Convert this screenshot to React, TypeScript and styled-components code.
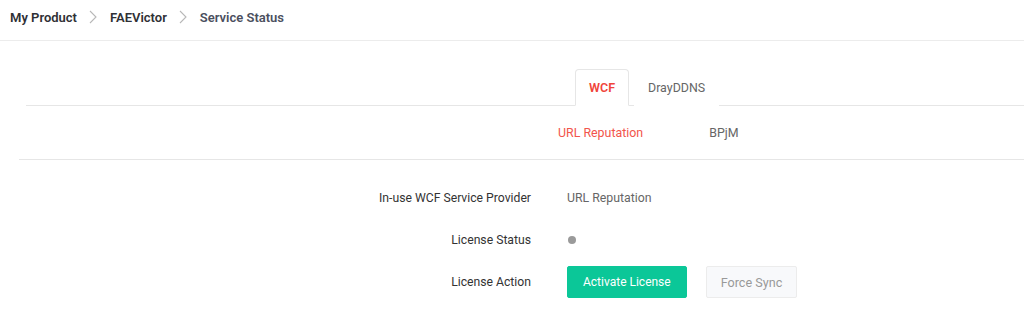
import styled, { createGlobalStyle } from "styled-components";

const GlobalStyle = createGlobalStyle`
    body {
        margin: 0;
        background: #fff;
        font-family: Roboto, "Liberation Sans", Arial, sans-serif;
        color: #333;
    }
`;

const Page = styled.div`
    width: 1024px;
    height: 310px;
    overflow: hidden;
`;

const Breadcrumb = styled.nav`
    height: 34px;
    padding: 0 10px 6px;
    display: flex;
    align-items: center;
    border-bottom: 1px solid #ececec;
`;

const Crumb = styled.span<{ $current?: boolean }>`
    font-size: 13px;
    font-weight: 600;
    color: ${(p) => (p.$current ? "#4b4f5e" : "#2f3035")};
`;

const Sep = styled.span`
    display: flex;
    align-items: center;
    padding: 0 13px 0 12px;
`;

const TabBar = styled.div`
    margin: 28px 0 0 26px;
    padding-left: 549px;
    display: flex;
    border-bottom: 1px solid #e6e6e6;
`;

const Tab = styled.div<{ $active?: boolean }>`
    height: 35px;
    padding: 0 13px;
    margin-bottom: -1px;
    display: flex;
    align-items: center;
    font-size: ${(p) => (p.$active ? "12.5px" : "12.4px")};
    font-weight: ${(p) => (p.$active ? 600 : 400)};
    color: ${(p) => (p.$active ? "#f0443a" : "#666")};
    background: #fff;
    border: 1px solid ${(p) => (p.$active ? "#e6e6e6" : "transparent")};
    border-bottom: 1px solid ${(p) => (p.$active ? "#fff" : "transparent")};
    border-radius: 4px 4px 0 0;
    & + & {
        margin-left: 5px;
    }
`;

const SubTabBar = styled.div`
    margin-left: 19px;
    height: 53px;
    padding-left: 539px;
    display: flex;
    align-items: center;
    gap: 66px;
    border-bottom: 1px solid #e6e6e6;
`;

const SubTab = styled.span<{ $active?: boolean }>`
    font-size: 12.4px;
    color: ${(p) => (p.$active ? "#f2554c" : "#666")};
`;

const Form = styled.div`
    padding-top: 17px;
    display: grid;
    grid-template-columns: 531px 1fr;
    column-gap: 36px;
    grid-auto-rows: 42px;
    align-items: center;
`;

const Label = styled.span`
    font-size: 12.2px;
    color: #333;
    text-align: right;
`;

const Value = styled.div`
    font-size: 12.3px;
    color: #666;
    display: flex;
    align-items: center;
    gap: 19px;
`;

const Dot = styled.span`
    width: 8px;
    height: 8px;
    margin-left: 1px;
    border-radius: 50%;
    background: #9a9a9a;
`;

const Button = styled.button<{ $primary?: boolean }>`
    height: 32px;
    padding: 0 ${(p) => (p.$primary ? "15px" : "14px")};
    font-family: inherit;
    font-size: ${(p) => (p.$primary ? "12px" : "12.6px")};
    border-radius: 2px;
    cursor: pointer;
    color: ${(p) => (p.$primary ? "#fff" : "#999")};
    background: ${(p) => (p.$primary ? "#0bc798" : "#f8f9fb")};
    border: 1px solid ${(p) => (p.$primary ? "#0bc798" : "#ececec")};
`;

const Chevron = () => (
    <svg width="8" height="14" viewBox="0 0 8 14">
        <path d="M1 1l6 6-6 6" fill="none" stroke="#b8b8b8" strokeWidth="1.1" />
    </svg>
);

export default function App() {
    return (
        <Page>
            <GlobalStyle />
            <Breadcrumb>
                <Crumb>My Product</Crumb>
                <Sep><Chevron /></Sep>
                <Crumb>FAEVictor</Crumb>
                <Sep><Chevron /></Sep>
                <Crumb $current>Service Status</Crumb>
            </Breadcrumb>
            <TabBar>
                <Tab $active>WCF</Tab>
                <Tab>DrayDDNS</Tab>
            </TabBar>
            <SubTabBar>
                <SubTab $active>URL Reputation</SubTab>
                <SubTab>BPjM</SubTab>
            </SubTabBar>
            <Form>
                <Label>In-use WCF Service Provider</Label>
                <Value>URL Reputation</Value>
                <Label>License Status</Label>
                <Value><Dot /></Value>
                <Label>License Action</Label>
                <Value>
                    <Button $primary>Activate License</Button>
                    <Button>Force Sync</Button>
                </Value>
            </Form>
        </Page>
    );
}
